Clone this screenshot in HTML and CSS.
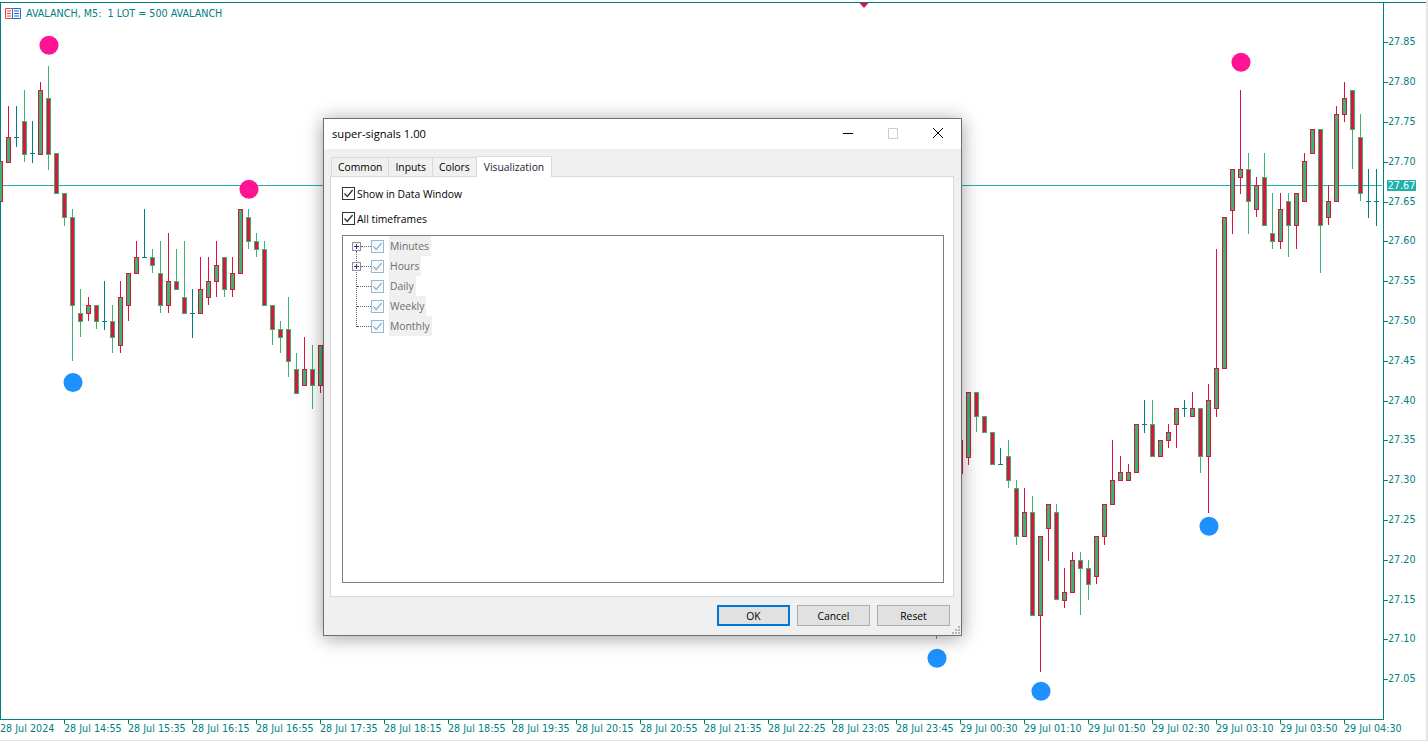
FILE: index.html
```html
<!DOCTYPE html>
<html lang="en">
<head>
<meta charset="utf-8">
<title>AVALANCH, M5 - super-signals</title>
<link rel="stylesheet" href="styles.css">
</head>
<body>
<svg class="defs" width="0" height="0" aria-hidden="true">
  <symbol id="tick" viewBox="0 0 11 11"><path d="M1.5 5.5 4.3 8.5 9.6 2" fill="none" stroke="currentColor" stroke-width="1.3"/></symbol>
</svg>
<main class="terminal">
  <div class="chart-row">
    <div class="plot">
      <svg class="candles" id="candles" width="1382" height="716" viewBox="0 3 1382 716">
        <line class="price-line" x1="0" x2="1382" y1="185.5" y2="185.5"/>
        <g id="bars"></g>
        <polygon class="marker" points="859.5,3 868.5,3 864,8"/>
        <g class="sell"><circle cx="49" cy="45.3" r="9.5"/><circle cx="249" cy="189.3" r="9.5"/><circle cx="1241" cy="62.3" r="9.5"/></g>
        <g class="buy"><circle cx="73" cy="382.5" r="9.5"/><circle cx="937" cy="658.3" r="9.5"/><circle cx="1041" cy="691.3" r="9.5"/><circle cx="1209" cy="526.3" r="9.5"/></g>
      </svg>
      <header class="chart-head">
        <svg class="chart-icon" width="16" height="11" viewBox="0 0 16 11">
          <path d="M.5.5h7v10h-7z" fill="#fff" stroke="#e2453b"/>
          <path d="M7.5.5h8v10h-8z" fill="#fff" stroke="#1f6fc4"/>
          <path d="M2 3h4M2 5.5h4M2 8h4" stroke="#e2453b"/>
          <path d="M9 3h5M9 5.5h5M9 8h5" stroke="#1f6fc4"/>
        </svg>
        <span class="chart-title">AVALANCH, M5:  1 LOT = 500 AVALANCH</span>
      </header>
    </div>
    <aside class="price-axis">
      <span class="price">27.85</span><span class="price">27.80</span><span class="price">27.75</span><span class="price">27.70</span>
      <span class="price">27.65</span><span class="price">27.60</span><span class="price">27.55</span><span class="price">27.50</span>
      <span class="price">27.45</span><span class="price">27.40</span><span class="price">27.35</span><span class="price">27.30</span>
      <span class="price">27.25</span><span class="price">27.20</span><span class="price">27.15</span><span class="price">27.10</span>
      <span class="price">27.05</span>
      <span class="last-price">27.67</span>
    </aside>
  </div>
  <footer class="time-axis">
    <span class="time">28 Jul 2024</span><span class="time">28 Jul 14:55</span><span class="time">28 Jul 15:35</span><span class="time">28 Jul 16:15</span>
    <span class="time">28 Jul 16:55</span><span class="time">28 Jul 17:35</span><span class="time">28 Jul 18:15</span><span class="time">28 Jul 18:55</span>
    <span class="time">28 Jul 19:35</span><span class="time">28 Jul 20:15</span><span class="time">28 Jul 20:55</span><span class="time">28 Jul 21:35</span>
    <span class="time">28 Jul 22:25</span><span class="time">28 Jul 23:05</span><span class="time">28 Jul 23:45</span><span class="time">29 Jul 00:30</span>
    <span class="time">29 Jul 01:10</span><span class="time">29 Jul 01:50</span><span class="time">29 Jul 02:30</span><span class="time">29 Jul 03:10</span>
    <span class="time">29 Jul 03:50</span><span class="time">29 Jul 04:30</span>
  </footer>
</main>

<section class="dialog" role="dialog" aria-label="super-signals 1.00">
  <div class="titlebar">
    <span class="dialog-title">super-signals 1.00</span>
    <div class="win-controls">
      <svg class="win-btn" width="12" height="12" viewBox="0 0 12 12"><path d="M1 5.5h10" stroke="#000"/></svg>
      <svg class="win-btn" width="12" height="12" viewBox="0 0 12 12"><path d="M1.5 .5h9v10h-9z" fill="none" stroke="#ccc"/></svg>
      <svg class="win-btn" width="12" height="12" viewBox="0 0 12 12"><path d="M1 0 11 10M11 0 1 10" stroke="#000" fill="none"/></svg>
    </div>
  </div>
  <div class="dialog-body">
    <nav class="tabs">
      <span class="tab">Common</span>
      <span class="tab">Inputs</span>
      <span class="tab">Colors</span>
      <span class="tab tab-active">Visualization</span>
    </nav>
    <div class="pane">
      <label class="check-row"><span class="check"><svg width="11" height="11"><use href="#tick"/></svg></span>Show in Data Window</label>
      <label class="check-row"><span class="check"><svg width="11" height="11"><use href="#tick"/></svg></span>All timeframes</label>
      <div class="tree">
        <div class="tree-guide"></div>
        <div class="tree-row"><span class="expander"></span><span class="dots"></span><span class="tree-check"><svg width="11" height="11"><use href="#tick"/></svg></span><span class="tree-label">Minutes</span></div>
        <div class="tree-row"><span class="expander"></span><span class="dots"></span><span class="tree-check"><svg width="11" height="11"><use href="#tick"/></svg></span><span class="tree-label">Hours</span></div>
        <div class="tree-row"><span class="leaf-dots"></span><span class="tree-check"><svg width="11" height="11"><use href="#tick"/></svg></span><span class="tree-label">Daily</span></div>
        <div class="tree-row"><span class="leaf-dots"></span><span class="tree-check"><svg width="11" height="11"><use href="#tick"/></svg></span><span class="tree-label">Weekly</span></div>
        <div class="tree-row"><span class="leaf-dots"></span><span class="tree-check"><svg width="11" height="11"><use href="#tick"/></svg></span><span class="tree-label">Monthly</span></div>
      </div>
    </div>
    <div class="actions">
      <button class="btn btn-default" type="button">OK</button>
      <button class="btn" type="button">Cancel</button>
      <button class="btn" type="button">Reset</button>
    </div>
    <svg class="grip" width="10" height="9" viewBox="0 0 10 9"><path d="M7 0h2v2H7zM4 3h2v2H4zM7 3h2v2H7zM1 6h2v2H1zM4 6h2v2H4zM7 6h2v2H7z" fill="#b5b5b5"/></svg>
  </div>
</section>
<script src="chart.js"></script>
</body>
</html>
```
FILE: styles.css
```css
* { box-sizing: border-box; }
html, body { margin: 0; height: 100%; background: #fff; overflow: hidden; }
body { width: 1428px; height: 741px; position: relative; font-family: "Liberation Sans", Arial, sans-serif; border-right: 2px solid #e6e6e6; border-bottom: 1px solid #e4e4e4; }
.defs { position: absolute; }

.terminal { width: 1426px; height: 740px; padding-top: 2px; display: flex; flex-direction: column; background: #fff; }

.chart-row { display: flex; height: 717px; border-top: 1px solid #008080; border-left: 1px solid #008080; }
.plot { position: relative; width: 1382px; height: 716px; }
.candles { display: block; position: absolute; left: -1px; top: 0; }
.chart-head { position: relative; display: flex; align-items: center; gap: 5px; padding: 5px 0 0 4px; height: 16px; }
.chart-icon { flex: none; }
.chart-title { font: 10.7px/11px "DejaVu Sans", sans-serif; font-stretch: condensed; color: #008080; white-space: pre; }

.price-line { stroke: #20b2aa; stroke-width: 1; }
.marker { fill: #dc143c; }
.sell { fill: #ff1493; }
.buy { fill: #1e90ff; }
.wick-up { stroke: #dc143c; fill: none; }
.wick-down { stroke: #3cb371; fill: none; }
.doji { stroke: #008080; fill: none; }
.body-up { stroke: #dc143c; fill: #3cb371; }
.body-down { stroke: #3cb371; fill: #dc143c; }

.price-axis { position: relative; width: 43px; border-left: 1px solid #008080; padding-top: 19.6px; display: flex; flex-direction: column; }
.price { flex: 0 0 39.8px; display: flex; align-items: center; padding-left: 4px; position: relative; font: 10.7px/12px "DejaVu Sans", sans-serif; font-stretch: condensed; color: #008080; }
.price::before { content: ""; position: absolute; left: 0; top: 50%; width: 4px; height: 1px; background: #008080; }
.last-price { position: absolute; left: 3px; top: 177px; width: 29px; height: 11px; background: #20b2aa; color: #fff; font: 10.7px/11px "DejaVu Sans", sans-serif; font-stretch: condensed; text-align: center; }

.time-axis { display: flex; height: 21px; border-top: 1px solid #008080; width: 1384px; }
.time { flex: 0 0 64px; position: relative; padding-top: 3px; font: 10.7px/12px "DejaVu Sans", sans-serif; font-stretch: condensed; color: #008080; white-space: nowrap; }
.time::before { content: ""; position: absolute; left: 0; top: 0; width: 1px; height: 4px; background: #008080; }
.time:first-child::before { display: none; }

.dialog { position: absolute; left: 323px; top: 118px; width: 639px; height: 518px; display: flex; flex-direction: column; background: #f0f0f0; border: 1px solid #6e6e6e; box-shadow: 0 2px 18px rgba(0, 0, 0, .38); font-family: "Open Sans", sans-serif; font-size: 10.35px; color: #000; }
.titlebar { height: 30px; flex: none; background: #fff; display: flex; align-items: center; justify-content: space-between; padding: 0 17px 0 8px; }
.dialog-title { font-size: 11.2px; position: relative; bottom: 1px; }
.win-controls { display: flex; gap: 33px; }
.win-btn { display: block; }
.dialog-body { flex: 1; position: relative; padding: 7px 7px 0 6px; display: flex; flex-direction: column; min-height: 0; }
.tabs { display: flex; height: 20px; padding-left: 1px; align-items: flex-end; position: relative; z-index: 1; }
.tab { height: 19px; padding: 0 6px; display: flex; align-items: center; border: 1px solid #d9d9d9; border-bottom: 0; border-left: 0; background: #f0f0f0; }
.tab:first-child { border-left: 1px solid #d9d9d9; }
.tab-active { height: 21px; margin-bottom: -1px; background: #fff; padding: 0 7px; color: #1b1b33; }
.pane { height: 421px; background: #fff; border: 1px solid #d9d9d9; padding: 10px 9px 13px 11px; display: flex; flex-direction: column; }
.check-row { display: flex; align-items: center; height: 13px; margin-bottom: 12px; gap: 2px; color: #000; }
.check { width: 13px; height: 13px; border: 1px solid #333; background: #fff; display: flex; align-items: center; justify-content: center; color: #333; flex: none; }
.tree { position: relative; flex: 1; margin-top: -2px; border: 1px solid #7f7f7f; }
.tree-guide { position: absolute; left: 13px; top: 15px; height: 76px; border-left: 1px dotted #666; }
.tree-row { display: flex; align-items: center; height: 20px; padding-left: 9px; position: relative; }
.expander { width: 9px; height: 9px; border: 1px solid #8f8f8f; background: linear-gradient(#243a9a, #243a9a) center/5px 1px no-repeat, linear-gradient(#243a9a, #243a9a) center/1px 5px no-repeat, #f7f7f7; flex: none; }
.dots { width: 10px; border-top: 1px dotted #666; }
.leaf-dots { width: 14px; margin-left: 5px; border-top: 1px dotted #666; }
.tree-check { width: 13px; height: 13px; border: 1px solid #8fbad9; background: #fafafa; color: #9ab0c0; display: flex; align-items: center; justify-content: center; flex: none; }
.tree-label { margin-left: 5px; height: 20px; padding: 0 2px 0 1px; display: flex; align-items: center; background: #f0f0f0; color: #6d6d6d; }
.actions { display: flex; justify-content: flex-end; gap: 7px; padding: 8px 4px 0 0; }
.btn { width: 73px; height: 21px; padding: 0; background: #e1e1e1; border: 1px solid #adadad; border-radius: 0; font: inherit; color: #000; }
.btn-default { border: 2px solid #0078d7; }
.grip { position: absolute; right: 0; bottom: 0; }
```
FILE: chart.js
```js
// x, high, bodyTop, bodyBottom, low. 0 = no wick on that side.
const up = [
  [0,0,161,201,0],[8,106,137,162,0],[40,82,90,154,0],[88,297,305,313,321],[120,281,297,345,353],[128,0,273,305,321],
  [136,241,257,273,0],[168,233,281,305,313],[200,257,289,313,0],[208,257,281,297,305],[216,241,265,281,297],[232,257,273,289,297],
  [240,0,209,273,0],[304,337,369,385,0],[320,0,345,385,393],[960,0,440,473,0],[968,0,392,457,465],[1024,488,512,536,0],
  [1040,0,536,615,672],[1048,0,504,528,561],[1064,568,592,600,608],[1072,552,560,592,0],[1096,0,536,576,584],[1104,0,504,536,545],
  [1112,440,480,504,0],[1120,456,472,480,0],[1128,464,472,480,0],[1136,0,424,472,0],[1160,0,440,456,0],[1168,424,432,440,448],
  [1176,0,408,424,448],[1192,392,408,416,0],[1208,384,400,456,513],[1216,249,368,408,417],[1224,0,217,368,0],[1232,0,169,210,234],
  [1240,90,169,177,194],[1256,177,185,209,217],[1280,193,209,241,249],[1296,0,193,225,249],[1304,153,161,201,0],[1312,0,129,153,0],
  [1328,185,201,217,225],[1336,106,114,201,0],[1344,82,98,114,122]
];
const down = [
  [24,90,121,154,162],[48,66,98,154,170],[56,0,153,193,0],[64,0,193,217,226],[72,209,217,305,361],[80,289,313,321,337],
  [96,0,305,321,329],[112,305,321,337,353],[152,249,257,265,273],[160,241,273,305,313],[176,249,281,289,0],[184,241,297,313,0],
  [224,257,257,289,297],[248,209,217,241,249],[256,233,241,249,257],[264,241,249,305,0],[272,0,305,329,345],[280,321,329,337,353],
  [288,297,329,361,377],[296,353,369,393,0],[312,345,369,385,409],[936,0,600,630,639],[976,0,392,416,432],[984,0,416,432,0],[992,0,432,464,0],
  [1008,440,456,480,488],[1016,480,488,536,545],[1032,496,512,615,0],[1056,504,512,599,0],[1080,552,560,568,615],[1088,560,568,584,600],
  [1152,400,424,456,0],[1200,0,408,456,473],[1248,153,169,201,234],[1264,153,177,225,0],[1272,193,233,241,249],[1288,193,201,225,257],
  [1320,0,129,225,273],[1352,0,90,129,169],[1360,114,137,193,201]
];
// x, high, line, low
const doji = [
  [16,106,137,146],[32,121,153,162],[104,281,321,329],[144,209,257,257],[192,289,313,337],[1000,448,464,464],[1144,400,424,432],
  [1184,400,408,416],[1368,169,201,217],[1376,169,201,225]
];

const SVG_NS = "http://www.w3.org/2000/svg";
const bars = document.getElementById("bars");

function addPath(cls, d) {
  const p = document.createElementNS(SVG_NS, "path");
  p.setAttribute("class", cls);
  p.setAttribute("d", d);
  p.setAttribute("shape-rendering", "crispEdges");
  bars.appendChild(p);
}

function wicks(list) {
  return list.map(([x, h, t, b, l]) =>
    (h ? `M${x + .5} ${h}V${t}` : "") + (l ? `M${x + .5} ${b}V${l}` : "")).join("");
}

function bodies(list) {
  return list.map(([x, , t, b]) => `M${x - 1.5} ${t + .5}h4V${b + .5}h-4z`).join("");
}

addPath("wick-up", wicks(up));
addPath("wick-down", wicks(down));
addPath("body-up", bodies(up));
addPath("body-down", bodies(down));
addPath("doji", doji.map(([x, h, m, l]) =>
  `M${x + .5} ${h}V${l + 1}M${x - 2} ${m + .5}h5`).join(""));
```
